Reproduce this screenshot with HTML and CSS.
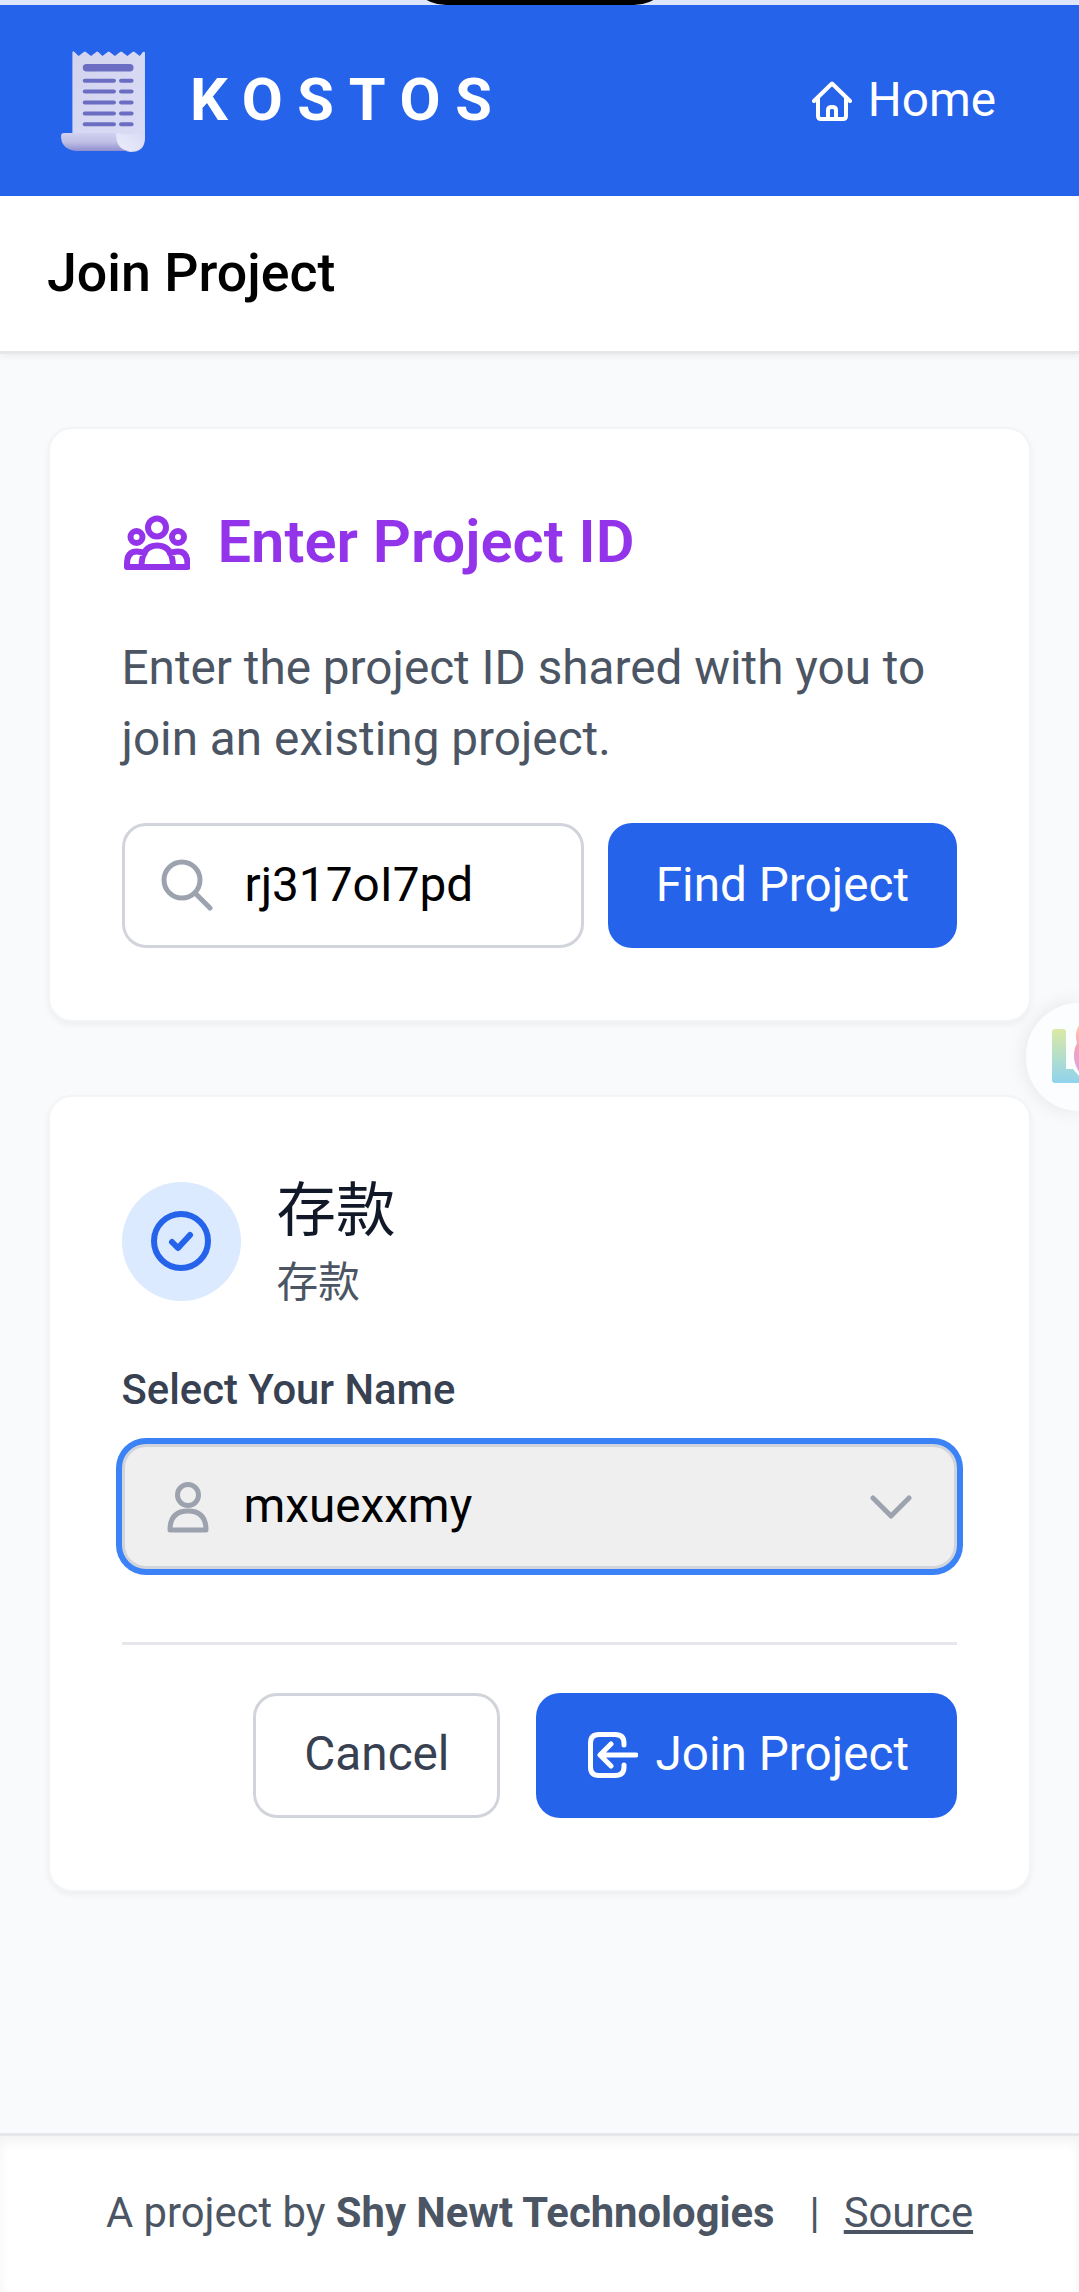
FILE: index.html
```html
<!DOCTYPE html>
<html lang="en">
<head>
<meta charset="utf-8">
<title>Kostos – Join Project</title>
<link rel="stylesheet" href="styles.css">
</head>
<body>
<div class="statusbar"><span class="camera"></span></div>
<header class="header">
  <div class="brand">
    <svg class="logo" viewBox="0 0 82 102" preserveAspectRatio="none">
      <defs>
        <linearGradient id="paper" x1="0" y1="0" x2="1" y2="1"><stop offset="0" stop-color="#d3d3ee"/><stop offset="1" stop-color="#dadcf6"/></linearGradient>
        <linearGradient id="roll" x1="0" y1="0" x2="0" y2="1"><stop offset="0" stop-color="#d2d0f0"/><stop offset=".5" stop-color="#bfbfe6"/><stop offset="1" stop-color="#8f8fd0"/></linearGradient>
        <linearGradient id="curl" x1="0" y1="1" x2="1" y2="0"><stop offset="0" stop-color="#eceefb"/><stop offset="1" stop-color="#d6d8f4"/></linearGradient>
      </defs>
      <path fill="url(#paper)" d="M11 90V3q0-3 2-1l4 4 5-4q1-1 2 0l5 4 5-4q1-1 2 0l4 4 5-4q1-1 2 0l5 4 5-4q1-1 2 0l5 4 5-4q1-1 2 0l5 4 3-4q2-1 2 1v85q0 14-14 14z"/>
      <path fill="url(#roll)" d="M3 83h52v10l10 8H14Q0 99 0 86q0-3 3-3z"/>
      <path fill="url(#curl)" d="M53 83q16 4 28-4v9q-2 13-15 13-13-1-13-18z"/>
      <g fill="#6a6dc2"><rect x="21" y="14" width="49" height="7.500" rx="3.700"/>
      <rect x="21" y="28.800" width="32" height="4" rx="2"/><rect x="56" y="28.800" width="14" height="4" rx="2"/>
      <rect x="21" y="39.500" width="32" height="4" rx="2"/><rect x="56" y="39.500" width="14" height="4" rx="2"/>
      <rect x="21" y="50.500" width="32" height="4" rx="2"/><rect x="56" y="50.500" width="14" height="4" rx="2"/>
      <rect x="21" y="61.500" width="32" height="4" rx="2"/><rect x="56" y="61.500" width="14" height="4" rx="2"/>
      <rect x="21" y="72.300" width="32" height="4" rx="2"/><rect x="56" y="72.300" width="14" height="4" rx="2"/></g>
    </svg>
    <span class="wordmark">KOSTOS</span>
  </div>
  <a class="home">
    <svg class="home-icon" viewBox="0 0 40 40"><path d="M2 20 20 2.500 38 20M6 17v18q0 3 3 3h22q3 0 3-3V17M16 38V29q0-3 4-3t4 3v9"/></svg>
    Home
  </a>
</header>
<div class="subheader"><h1>Join Project</h1></div>
<main class="main">
  <section class="card find">
    <h2><svg class="people" viewBox="0 1 68 56"><circle cx="35" cy="13.500" r="9"/><circle cx="14.500" cy="23" r="6"/><circle cx="56" cy="23" r="6"/><path d="M19.500 53q0-21.500 15.700-21.500T51 53M19.500 53H5V50q0-12.500 9.500-12.500 4.500 0 8 2M51 53h14.500V50q0-12.500-9.500-12.500-4.500 0-8 2M19.500 53H51"/></svg>Enter Project ID</h2>
    <p>Enter the project ID shared with you to join an existing project.</p>
    <div class="row">
      <div class="field"><svg class="search" viewBox="0 0 52 52"><circle cx="21" cy="21" r="18"/><path d="M34 34 49 49"/></svg><span>rj317oI7pd</span></div>
      <button class="btn primary">Find Project</button>
    </div>
  </section>
  <section class="card join">
    <div class="project">
      <div class="avatar"><svg viewBox="0 0 60 60"><circle cx="30" cy="30" r="27"/><path d="M21 31l6 6 12-13"/></svg></div>
      <div><h3>存款</h3><div class="desc">存款</div></div>
    </div>
    <label>Select Your Name</label>
    <div class="field select"><svg class="user" viewBox="0 0 42 52"><circle cx="21" cy="14" r="10.500"/><path d="M3 49q0-19 18-19t18 19z"/></svg><span>mxuexxmy</span><svg class="chevron" viewBox="0 0 42 24"><path d="M3 3 21 21 39 3"/></svg></div>
    <div class="actions">
      <button class="btn ghost">Cancel</button>
      <button class="btn primary"><svg class="enter" viewBox="0 0 50 46"><path d="M36 13V11q0-8.500-9-8.500H11q-8.500 0-8.500 8.500v24q0 8.500 8.500 8.500h16q9 0 9-8.500V33M48 23H13M23 12 12 23 23 34"/></svg>Join Project</button>
    </div>
  </section>
</main>
<footer class="footer"><span>A project by <b>Shy Newt Technologies</b></span><span class="bar">|</span><a>Source</a></footer>
<div class="bubble"><svg viewBox="0 0 53 108">
  <defs><linearGradient id="leaf" x1="0" y1="0" x2="0" y2="1"><stop offset="0" stop-color="#dbe9a5"/><stop offset="1" stop-color="#8fd3ee"/></linearGradient>
  <linearGradient id="petal" x1="0" y1="0" x2="0" y2="1"><stop offset="0" stop-color="#fbcf9f"/><stop offset=".5" stop-color="#f6a0bd"/><stop offset="1" stop-color="#d9a5e6"/></linearGradient></defs>
  <path fill="url(#leaf)" d="M29 26h8q3 0 3 3v37h7l6 7v7H29q-3 0-3-3V29q0-3 3-3z"/>
  <path fill="url(#petal)" d="M53 22q-5 8-2 18-7 14 2 29z"/></svg></div>
</body>
</html>
```
FILE: styles.css
```css
* { box-sizing: border-box; }
body {
  margin: 0;
  height: 2292px;
  display: flex;
  flex-direction: column;
  position: relative;
  overflow: hidden;
  background: #f9fafb;
  color: #000;
  font: 47.7px/71.4px Roboto, "Noto Sans CJK SC", sans-serif;
}
h1, h2, h3, p { margin: 0; }
svg { display: block; flex: none; fill: none; stroke: currentColor; stroke-linecap: round; stroke-linejoin: round; }
.statusbar { height: 5px; background: #dde6fa; display: flex; justify-content: center; overflow: hidden; flex: none; align-items: flex-end; }
.camera { width: 268px; height: 80px; border-radius: 40px; background: #000; flex: none; }
.header { height: 191px; flex: none; background: #2563eb; color: #fff; display: flex; align-items: center; justify-content: space-between; padding: 0 83px 0 61px; }
.brand { display: flex; align-items: center; gap: 44px; }
.logo { width: 85px; height: 102px; stroke: none; }
.wordmark { font-size: 59.5px; font-weight: 700; letter-spacing: 14.7px; }
.home { display: flex; align-items: center; gap: 16px; }
.home-icon { width: 40px; height: 40px; stroke-width: 4; }
.subheader { height: 158px; flex: none; background: #fff; border-bottom: 3px solid #e5e7eb; padding: 0 47px 2px; display: flex; align-items: center; box-shadow: 0 3px 6px rgba(0,0,0,.05); }
h1 { font-size: 53.7px; font-weight: 500; }
.main { flex: 1; display: flex; flex-direction: column; gap: 73px; padding: 73px 48px 0; }
.card { background: #fff; border: 2px solid #f3f4f6; border-radius: 24px; padding: 72px 72px 0 71.500px; box-shadow: 0 3px 6px rgba(0,0,0,.05); }
.find { height: 595px; }
.join { height: 797px; padding-top: 73px; }
h2 { color: #9333ea; font-size: 59.6px; font-weight: 600; line-height: 83px; display: flex; align-items: center; gap: 28px; }
.people { width: 68px; height: 56px; stroke-width: 6; }
.find p { color: #4b5563; margin: 49px 0 47px; }
.row { display: flex; gap: 24px; }
.field { flex: 1; height: 125px; border: 3px solid #d1d5db; border-radius: 24px; display: flex; align-items: center; padding: 0 36px; background: #fff; }
.search { width: 52px; height: 52px; stroke-width: 5; color: #9ca3af; margin-right: 32px; }
.btn { font: inherit; height: 125px; border: 0; border-radius: 24px; display: flex; align-items: center; padding: 0 48px; }
.primary { background: #2563eb; color: #fff; }
.project { display: flex; align-items: center; gap: 36px; }
.avatar { width: 119px; height: 119px; border-radius: 50%; background: #dbeafe; color: #2563eb; display: flex; align-items: center; justify-content: center; }
.avatar svg { width: 60px; height: 60px; stroke-width: 6; }
h3 { font-size: 59.5px; font-weight: 400; line-height: 83px; color: #111827; }
.desc { font-size: 41.65px; line-height: 59.5px; color: #4b5563; }
label { display: block; margin: 47px 0 25px; font-size: 41.75px; line-height: 59.5px; font-weight: 500; color: #374151; }
.select { background: #efefef; box-shadow: 0 0 0 6px #3b82f6; padding: 0 42px; }
.user { width: 42px; height: 52px; stroke-width: 5; color: #9ca3af; margin-right: 35px; }
.chevron { width: 42px; height: 24px; stroke-width: 5; color: #9ca3af; margin-left: auto; }
.actions { display: flex; justify-content: flex-end; gap: 36px; border-top: 3px solid #e5e7eb; margin-top: 72.500px; padding-top: 48px; }
.actions .primary { padding-left: 52px; }
.ghost { background: #fff; color: #374151; border: 3px solid #d1d5db; }
.enter { width: 50px; height: 46px; stroke-width: 5; margin-right: 17px; }
.footer { height: 159px; flex: none; background: #fff; border-top: 3px solid #e5e7eb; color: #4b5563; font-size: 41.75px; display: flex; align-items: center; justify-content: center; padding-bottom: 2px; box-shadow: inset 0 6px 12px rgba(0,0,0,.05); }
.footer b { font-weight: 700; }
.bar { margin: 0 24px 0 35px; }
.footer a { text-decoration: underline; }
.bubble { position: absolute; right: 0; top: 1003px; width: 53px; height: 108px; border-radius: 54px 0 0 54px; background: #fcfdfe; box-shadow: 0 0 20px rgba(0,0,0,.09); }
.bubble svg { width: 53px; height: 108px; stroke: none; }
```
